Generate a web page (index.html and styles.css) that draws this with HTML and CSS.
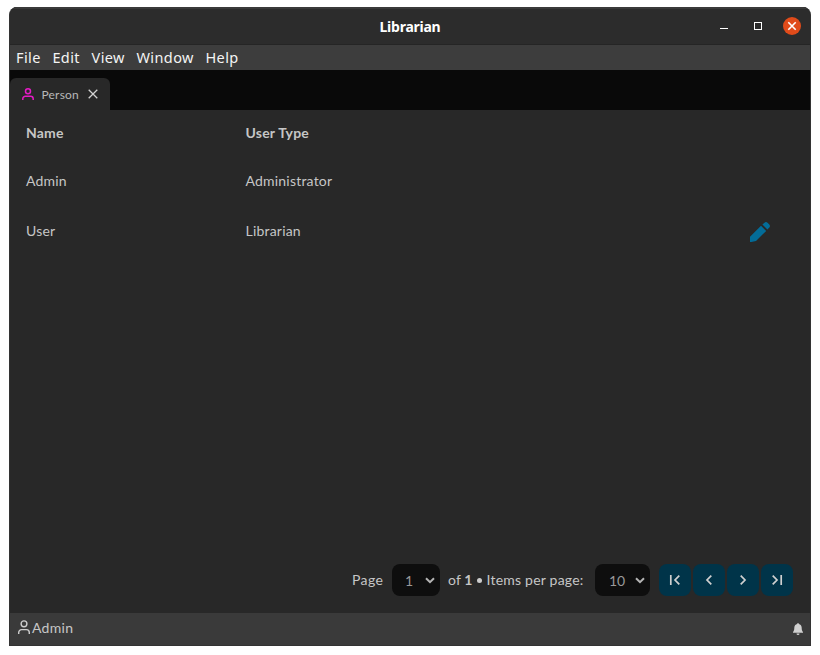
FILE: index.html
```html
<!DOCTYPE html>
<html lang="en">
<head>
<meta charset="utf-8">
<title>Librarian</title>
<link rel="stylesheet" href="styles.css">
</head>
<body>
<div class="window">
  <header class="titlebar">
    <h1 class="title">Librarian</h1>
    <div class="controls">
      <span class="minimize"></span>
      <span class="maximize"></span>
      <span class="close"><svg width="10" height="10" viewBox="0 0 10 10"><path d="M1.3 1.3l7.4 7.4M8.7 1.3L1.3 8.7" stroke="#fff" stroke-width="1.6"/></svg></span>
    </div>
  </header>
  <nav class="menubar"><span>File</span><span>Edit</span><span>View</span><span>Window</span><span>Help</span></nav>
  <div class="tabs">
    <div class="tab">
      <svg class="tab-user" width="12" height="13" viewBox="0 0 12 13"><circle cx="6" cy="3.3" r="2.5"/><path d="M.8 12v-1.2a2.6 2.6 0 0 1 2.6-2.6h5.2a2.6 2.6 0 0 1 2.6 2.6V12"/></svg>
      <span class="tab-label">Person</span>
      <svg class="tab-close" width="10" height="10" viewBox="0 0 10 10"><path d="M.7.7l8.6 8.6M9.3.7L.7 9.3"/></svg>
    </div>
  </div>
  <main class="content">
    <div class="row head"><span>Name</span><span>User Type</span></div>
    <div class="row"><span>Admin</span><span>Administrator</span></div>
    <div class="row"><span>User</span><span>Librarian</span>
      <svg class="pencil" width="20" height="20" viewBox="0 0 20 20"><path d="M11 3.7l5.2 5.2L6 19.1 1.3 20H0v-5.3zM12.4 2.5L14.2.9a2.6 2.6 0 0 1 3.6 0l1.3 1.3a2.6 2.6 0 0 1 0 3.6l-1.7 1.7z"/></svg>
    </div>
    <div class="pager">
      <span class="page">Page</span>
      <div class="select one"><span>1</span><svg width="10" height="7" viewBox="0 0 10 7"><path d="M1 1.2l4 4 4-4"/></svg></div>
      <span class="of">of <b>1</b></span><span class="dot"></span><span class="per">Items per page:</span>
      <div class="select ten"><span>10</span><svg width="10" height="7" viewBox="0 0 10 7"><path d="M1 1.2l4 4 4-4"/></svg></div>
      <div class="buttons">
        <button aria-label="First"><svg width="12" height="12" viewBox="0 0 12 12"><path d="M1.8 1v10M10.3 1.7L6 6l4.3 4.3"/></svg></button>
        <button aria-label="Previous"><svg width="12" height="12" viewBox="0 0 12 12"><path d="M8.3 1.7L4 6l4.3 4.3"/></svg></button>
        <button aria-label="Next"><svg width="12" height="12" viewBox="0 0 12 12"><path d="M3.7 1.7L8 6l-4.3 4.3"/></svg></button>
        <button aria-label="Last"><svg width="12" height="12" viewBox="0 0 12 12"><path d="M10.2 1v10M1.7 1.7L6 6l-4.3 4.3"/></svg></button>
      </div>
    </div>
  </main>
  <footer class="status">
    <svg class="status-user" width="12" height="15" viewBox="0 0 12 15"><circle cx="6" cy="3.8" r="2.9"/><path d="M.7 14v-1.5a2.9 2.9 0 0 1 2.9-2.9h4.8a2.9 2.9 0 0 1 2.9 2.9V14"/></svg>
    <span class="account">Admin</span>
    <svg class="bell" width="10" height="12" viewBox="0 0 10 12"><path d="M4.2.9a.8.8 0 0 1 1.6 0C7.6 1.3 8.7 2.8 8.7 4.7c0 2.2.4 3.3 1.3 4.2v.9H0v-.9c.9-.9 1.3-2 1.3-4.2C1.3 2.8 2.4 1.3 4.2.9zM3.5 10.5h3a1.5 1.5 0 0 1-3 0z"/></svg>
  </footer>
</div>
</body>
</html>
```
FILE: styles.css
```css
* { box-sizing: border-box; }
body { margin: 0; background: #fff; color: #c6c6c6; font: 14px/20px Lato, "Open Sans", sans-serif; }
svg { display: block; flex: none; overflow: visible; }
.window { width: 802px; height: 639px; margin: 7px 9px 0; display: flex; flex-direction: column; border: 1px solid #333; border-top: 0; border-radius: 8px 8px 0 0; overflow: hidden; background: #282828; }
.titlebar { height: 38px; flex: none; display: grid; grid-template-columns: 1fr auto 1fr; align-items: center; background: #2c2c2c; border-top: 2px solid #3a3a3a; border-bottom: 1px solid #252525; }
.title { grid-column: 2; margin: 0; color: #fff; font: bold 14px/20px "Noto Sans", sans-serif; letter-spacing: -.25px; }
.controls { display: flex; justify-content: flex-end; align-items: center; padding: 0 9px 2px 0; height: 100%; }
.minimize { width: 8px; height: 1px; background: #fff; margin: 5px 26px 0 0; }
.maximize { width: 8px; height: 8px; border: 1px solid #fff; margin-right: 21px; }
.close { width: 18px; height: 18px; border-radius: 50%; background: #e04b1a; display: grid; place-items: center; }
.menubar { height: 25px; flex: none; display: flex; gap: 11.6px; padding-left: 6px; background: #3d3d3d; color: #f4f4f4; font: 14.5px/25px "Noto Sans", sans-serif; letter-spacing: .4px; }
.tabs { height: 40px; flex: none; background: #090909; padding-top: 8px; }
.tab { width: 100px; height: 32px; display: flex; align-items: center; padding: 0 0 0 12px; background: #282828; border-radius: 6px 6px 0 0; }
.tab-user { fill: none; stroke: #e51bc5; stroke-width: 1.5; }
.tab-label { width: 37px; margin: 2px 9px 0 7.5px; font-size: 12px; letter-spacing: .2px; white-space: nowrap; color: #b8b8b8; }
.tab-close { stroke: #d2d2d2; stroke-width: 1.3; }
.content { flex: 1; display: flex; flex-direction: column; }
.row { height: 50px; display: grid; grid-template-columns: 219.5px 1fr 20px; align-items: center; padding: 0 40px 0 16px; letter-spacing: .2px; }
.row.head { height: 46px; font-weight: bold; letter-spacing: .2px; }
.pencil { fill: #036c98; margin-top: 2px; }
.pager { margin-top: auto; height: 66px; display: flex; align-items: center; justify-content: flex-end; padding-right: 17px; }
.page { width: 32px; letter-spacing: .4px; margin-right: 8px; }
.select { height: 32px; display: flex; align-items: center; justify-content: space-between; background: #0e0e0e; border-radius: 8px; padding: 1px 5px 0 13px; color: #999; }
.select svg { fill: none; stroke: #b5b5b5; stroke-width: 2; }
.one { width: 48px; margin-right: 8px; }
.ten { width: 55px; margin-right: 9px; padding-left: 14px; }
.of { width: 24px; letter-spacing: .1px; white-space: nowrap; }
.dot { width: 5px; height: 5px; border-radius: 50%; background: #cdcdcd; margin: 1px 5px 0 4.5px; }
.per { width: 97px; white-space: nowrap; letter-spacing: .22px; margin-right: 11.5px; }
.buttons { display: flex; gap: 2px; }
button { width: 32px; height: 32px; padding: 0; border: 0; border-radius: 8px; background: #003449; display: grid; place-items: center; }
button svg { fill: none; stroke: #d0d0d0; stroke-width: 1.7; }
.status { height: 32px; flex: none; display: flex; align-items: center; padding: 0 7px 2px 8px; background: #3a3a3a; }
.status-user { fill: none; stroke: #cdcdcd; stroke-width: 1.4; margin-bottom: 2px; }
.account { margin-left: 2px; letter-spacing: .3px; }
.bell { margin: 1px 0 0 auto; fill: #d0d0d0; }
```
